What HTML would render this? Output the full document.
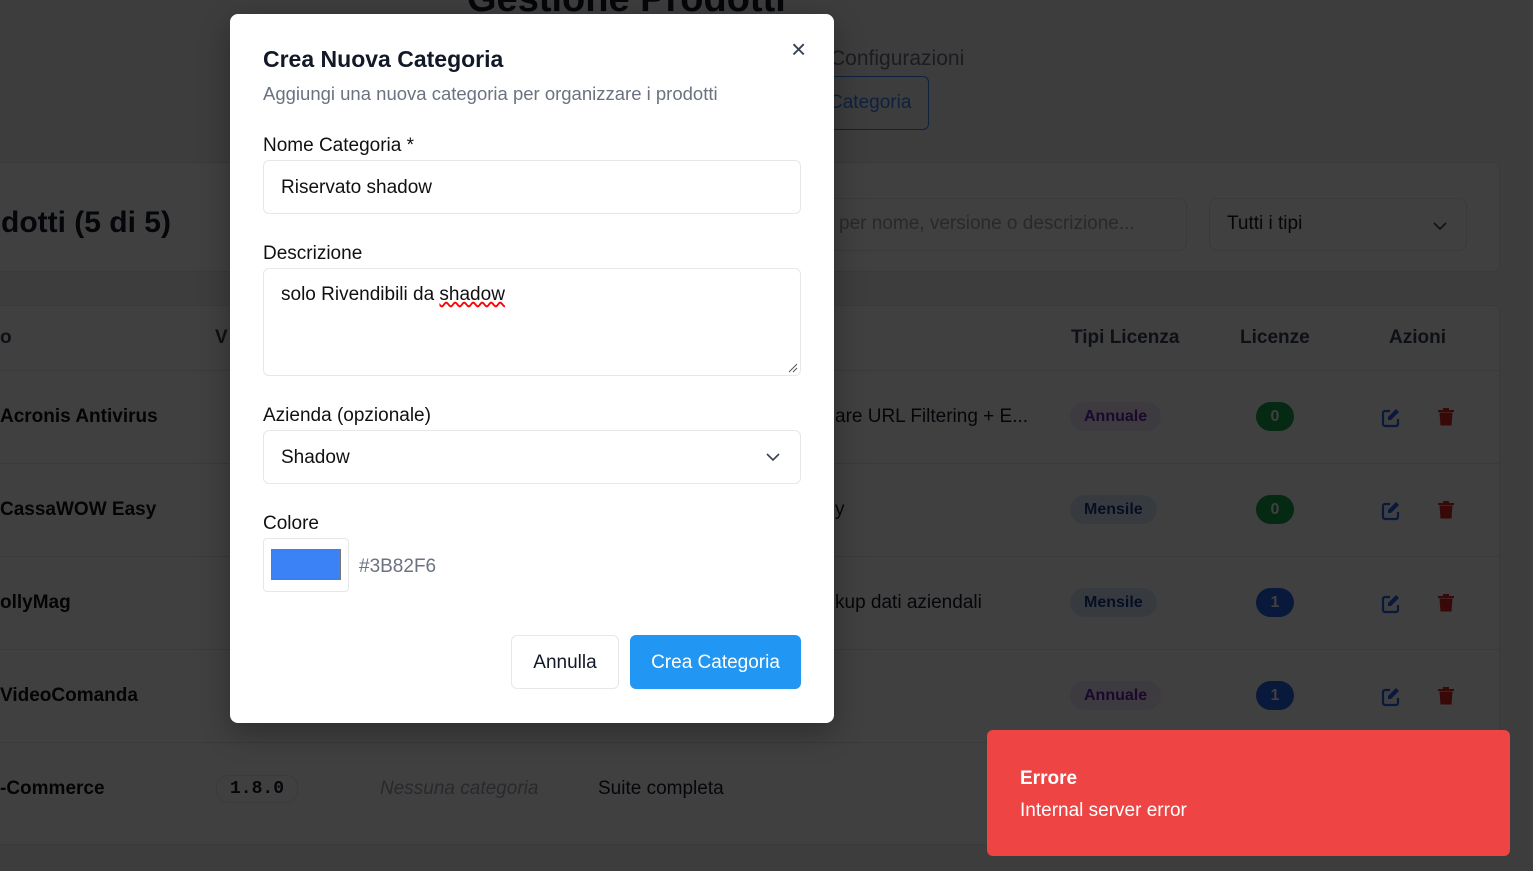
<!DOCTYPE html>
<html><head><meta charset="utf-8"><style>
*{box-sizing:border-box;margin:0;padding:0}
body{width:1533px;height:871px;overflow:hidden;background:#f3f4f6;font-family:"Liberation Sans",sans-serif;position:relative;color:#111827}
.abs{position:absolute}
.card{background:#fff;border:1px solid #e5e7eb;border-radius:8px}
.row{position:absolute;left:0;width:1500px;height:93px;border-top:1px solid #e5e7eb}
.row .n{position:absolute;left:0;top:35px;font-size:19px;font-weight:bold;color:#111}
.badge{position:absolute;left:1070px;top:31px;height:29px;border-radius:15px;padding:0 14px;font-size:16px;font-weight:bold;line-height:29px}
.cnt{position:absolute;left:1256px;top:31px;width:38px;height:29px;border-radius:15px;color:#fff;font-weight:bold;text-align:center;line-height:29px;font-size:16px}
.ed{position:absolute;left:1381px;top:37px}
.tr{position:absolute;left:1437px;top:36px}
.ov{position:absolute;inset:0;background:rgba(0,0,0,0.75)}
.modal{position:absolute;left:230px;top:14px;width:604px;height:709px;background:#fff;border-radius:8px;box-shadow:0 10px 30px rgba(0,0,0,.3)}
.lbl{position:absolute;left:33px;font-size:19px;color:#111}
.inp{position:absolute;left:33px;width:538px;border:1px solid #e5e7eb;border-radius:6px;font-size:19px;padding-left:17px;color:#111}
</style></head><body>
<div class="abs" style="left:467px;top:-22px;font-size:38px;font-weight:bold">Gestione Prodotti</div>
<div class="abs" style="left:830px;top:47px;font-size:21px;color:#6b7280">Configurazioni</div>
<div class="abs" style="left:800px;top:76px;width:129px;height:54px;border:1px solid #3b82f6;border-radius:6px;color:#3b82f6;font-size:19px;padding:15px 0 0 28px">Categoria</div>
<div class="card abs" style="left:-10px;top:162px;width:1510px;height:110px">
 <div class="abs" style="left:10px;top:43px;font-size:30px;font-weight:bold">dotti (5 di 5)</div>
 <div class="abs card" style="left:820px;top:35px;width:376px;height:53px;font-size:19px;color:#9ca3af;padding:14px 0 0 27px">per nome, versione o descrizione...</div>
 <div class="abs card" style="left:1218px;top:35px;width:258px;height:53px;font-size:19px;padding:14px 0 0 17px">Tutti i tipi<svg class="abs" style="left:223px;top:22px" width="14" height="10" viewBox="0 0 14 10"><path d="M1 2l6 6 6-6" fill="none" stroke="#374151" stroke-width="1.6"/></svg></div>
</div>
<div class="card abs" style="left:-10px;top:305px;width:1510px;height:540px"></div>
<div class="abs" style="left:0;top:327px;font-size:19px;font-weight:bold;color:#374151">o</div>
<div class="abs" style="left:215px;top:327px;font-size:19px;font-weight:bold;color:#374151">V</div>
<div class="abs" style="left:1071px;top:327px;font-size:19px;font-weight:bold;color:#374151">Tipi Licenza</div>
<div class="abs" style="left:1240px;top:327px;font-size:19px;font-weight:bold;color:#374151">Licenze</div>
<div class="abs" style="left:1389px;top:327px;font-size:19px;font-weight:bold;color:#374151">Azioni</div>
<svg width="0" height="0" style="position:absolute"><defs>
<g id="e"><path d="M9 3H4a2 2 0 0 0-2 2v11a2 2 0 0 0 2 2h11a2 2 0 0 0 2-2v-5" fill="none" stroke="#2563eb" stroke-width="2.2"/><path d="M15 1l3 3-8 8H7V9z" fill="#2563eb"/></g>
<g id="t"><path d="M1 3h16v2H1z M6 1h6v2H6z M2.5 5.5h13l-1 13h-11z" fill="#dc2626"/></g>
</defs></svg>
<div class="row" style="top:370px"><div class="n">Acronis Antivirus</div><div class="abs" style="left:835px;top:35px;font-size:19px">are URL Filtering + E...</div><div class="badge" style="background:#f3e8ff;color:#6b21a8">Annuale</div><div class="cnt" style="background:#16a34a">0</div><svg class="ed" width="20" height="20"><use href="#e"/></svg><svg class="tr" width="18" height="20"><use href="#t"/></svg></div>
<div class="row" style="top:463px"><div class="n">CassaWOW Easy</div><div class="abs" style="left:835px;top:35px;font-size:19px">y</div><div class="badge" style="background:#dbeafe;color:#1e3a8a">Mensile</div><div class="cnt" style="background:#16a34a">0</div><svg class="ed" width="20" height="20"><use href="#e"/></svg><svg class="tr" width="18" height="20"><use href="#t"/></svg></div>
<div class="row" style="top:556px"><div class="n">ollyMag</div><div class="abs" style="left:835px;top:35px;font-size:19px">kup dati aziendali</div><div class="badge" style="background:#dbeafe;color:#1e3a8a">Mensile</div><div class="cnt" style="background:#2563eb">1</div><svg class="ed" width="20" height="20"><use href="#e"/></svg><svg class="tr" width="18" height="20"><use href="#t"/></svg></div>
<div class="row" style="top:649px"><div class="n">VideoComanda</div><div class="badge" style="background:#f3e8ff;color:#6b21a8">Annuale</div><div class="cnt" style="background:#2563eb">1</div><svg class="ed" width="20" height="20"><use href="#e"/></svg><svg class="tr" width="18" height="20"><use href="#t"/></svg></div>
<div class="row" style="top:742px"><div class="n">-Commerce</div><div class="abs" style="left:216px;top:32px;border:1px solid #e5e7eb;border-radius:12px;padding:3px 13px;font-family:'Liberation Mono',monospace;font-size:18px;font-weight:bold">1.8.0</div><div class="abs" style="left:380px;top:35px;font-size:19px;font-style:italic;color:#9ca3af">Nessuna categoria</div><div class="abs" style="left:598px;top:35px;font-size:19px">Suite completa</div></div>
<div class="ov"></div>
<div class="modal">
 <div class="abs" style="left:561px;top:20px;font-size:26px;color:#374151">×</div>
 <div class="abs" style="left:33px;top:32px;font-size:23px;font-weight:bold">Crea Nuova Categoria</div>
 <div class="abs" style="left:33px;top:69px;font-size:18.5px;color:#6b7280">Aggiungi una nuova categoria per organizzare i prodotti</div>
 <div class="lbl" style="top:121px">Nome Categoria *</div>
 <div class="inp" style="top:146px;height:54px;padding-top:16px">Riservato shadow</div>
 <div class="lbl" style="top:229px">Descrizione</div>
 <div class="inp" style="top:254px;height:108px;padding-top:15px">solo Rivendibili da <span style="text-decoration:underline wavy red">shadow</span><svg class="abs" style="left:524px;top:94px" width="10" height="10"><path d="M1 9L9 1M5 9L9 5" stroke="#555" stroke-width="1"/></svg></div>
 <div class="lbl" style="top:391px">Azienda (opzionale)</div>
 <div class="inp" style="top:416px;height:54px;padding-top:16px">Shadow<svg class="abs" style="left:502px;top:21px" width="14" height="10" viewBox="0 0 14 10"><path d="M1 2l6 6 6-6" fill="none" stroke="#374151" stroke-width="1.6"/></svg></div>
 <div class="lbl" style="top:499px">Colore</div>
 <div class="abs" style="left:33px;top:524px;width:86px;height:54px;border:1px solid #e5e7eb;border-radius:4px"><div style="margin:10px 0 0 7px;width:70px;height:31px;background:#3b82f6;border:1px solid #777"></div></div>
 <div class="abs" style="left:129px;top:542px;font-size:19px;color:#6b7280">#3B82F6</div>
 <div class="abs" style="left:281px;top:621px;width:108px;height:54px;border:1px solid #e5e7eb;border-radius:6px;font-size:19px;text-align:center;line-height:54px">Annulla</div>
 <div class="abs" style="left:400px;top:621px;width:171px;height:54px;background:#2196f3;border-radius:6px;font-size:19px;text-align:center;line-height:56px;color:#fff">Crea Categoria</div>
</div>
<div class="abs" style="left:987px;top:730px;width:523px;height:126px;background:#ef4444;border-radius:6px;color:#fff">
 <div class="abs" style="left:33px;top:38px;font-size:19px;font-weight:bold">Errore</div>
 <div class="abs" style="left:33px;top:70px;font-size:19px">Internal server error</div>
</div>
</body></html>
